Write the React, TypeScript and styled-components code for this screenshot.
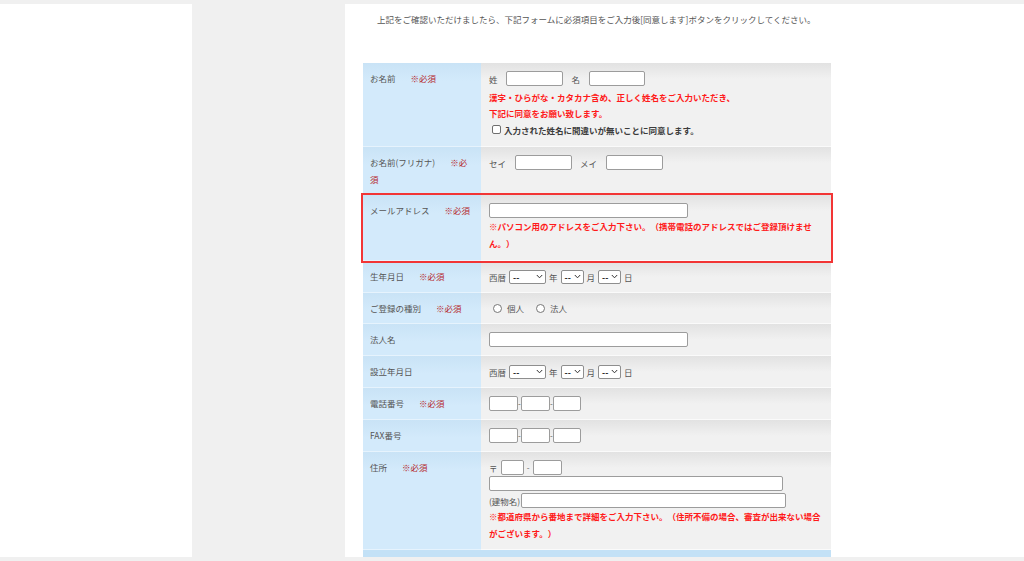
import React from 'react';
import styled, { createGlobalStyle, css } from 'styled-components';

const GlobalStyle = createGlobalStyle`
  html, body {
    margin: 0;
    padding: 0;
    background: #f0f0f0;
  }
  body {
    font-family: "Noto Sans CJK JP", "Noto Sans", sans-serif;
    color: #555;
    text-spacing-trim: space-all;
  }
`;

const Frame = styled.div`
  display: flex;
  height: 561px;
  padding: 4px 0;
  box-sizing: border-box;
  overflow: hidden;
`;

const SidePane = styled.aside`
  width: 192px;
  flex-shrink: 0;
  background: #fff;
`;

const Gutter = styled.div`
  width: 153px;
  flex-shrink: 0;
`;

const Main = styled.main`
  flex: 1;
  background: #fff;
  overflow: hidden;
  padding: 7px 0 0 18px;
`;

const Lead = styled.p`
  margin: 0 0 36px 14px;
  font-size: 8.5px;
  line-height: 16px;
  color: #555;
  white-space: nowrap;
`;

const Form = styled.div`
  width: 468px;
  display: flex;
  flex-direction: column;
`;

const Row = styled.div<{ $highlight?: boolean }>`
  display: grid;
  grid-template-columns: 118px 350px;
  ${(p) =>
    p.$highlight &&
    css`
      position: relative;
      z-index: 1;
      outline: 2px solid #f23535;
    `}
`;

const LabelCell = styled.div`
  padding: 7px 10px 6px 7px;
  background: linear-gradient(#c9e3f6, #d3eafb 18px, #d3eafb);
  border-bottom: 1px solid #e6f3fd;
  font-size: 8.5px;
  line-height: 17px;
  color: #555;
`;

const Required = styled.span`
  margin-left: 15px;
  color: #b5282c;
`;

const ValueCell = styled.div<{ $pb?: number }>`
  padding: 8px 8px ${(p) => p.$pb ?? 8}px 8px;
  background: linear-gradient(#e2e2e2, #f1f1f1 16px, #f1f1f1);
  border-bottom: 1px solid #fafafa;
  font-size: 8.5px;
  color: #555;
`;

const Line = styled.div<{ $gap?: number; $mt?: number; $h?: number }>`
  display: flex;
  align-items: center;
  gap: ${(p) => p.$gap ?? 0}px;
  height: ${(p) => p.$h ?? 15}px;
  margin-top: ${(p) => p.$mt ?? 0}px;
  white-space: nowrap;
`;

const TextInput = styled.input.attrs({ type: 'text' })<{ $w: number }>`
  width: ${(p) => p.$w}px;
  height: 15px;
  box-sizing: border-box;
  margin: 0;
  padding: 0 2px;
  border: 1px solid #9c9c9c;
  border-radius: 2px;
  background: #fff;
  outline: none;
  flex-shrink: 0;
`;

const Dash = styled.span`
  width: 3px;
  text-align: center;
  font-size: 8px;
  color: #555;
`;

const SelectBox = styled.span<{ $w: number }>`
  display: inline-flex;
  align-items: center;
  justify-content: space-between;
  width: ${(p) => p.$w}px;
  height: 14px;
  box-sizing: border-box;
  padding: 0 2px 0 3px;
  border: 1px solid #8e8e8e;
  border-radius: 2px;
  background: #fff;
  font-size: 8.5px;
  font-weight: bold;
  color: #222;
`;

const Note = styled.p<{ $lh?: number; $mt?: number }>`
  margin: ${(p) => p.$mt ?? 0}px 0 0 0;
  font-size: 8.5px;
  line-height: ${(p) => p.$lh ?? 17}px;
  font-weight: bold;
  color: #ff1a1a;
`;

const CheckLine = styled.label`
  display: flex;
  align-items: center;
  gap: 3px;
  height: 17px;
  padding-left: 3px;
  font-size: 8.5px;
  font-weight: bold;
  color: #3c3c3c;
`;

const CheckBox = styled.input.attrs({ type: 'checkbox' })`
  appearance: none;
  width: 9px;
  height: 9px;
  margin: 0;
  border: 1px solid #6f6f6f;
  border-radius: 2px;
  background: #fff;
`;

const RadioGroup = styled.div`
  display: flex;
  align-items: center;
  gap: 12px;
  height: 14px;
  padding-left: 4px;
`;

const RadioLabel = styled.label`
  display: flex;
  align-items: center;
  gap: 5px;
  font-size: 8.5px;
  color: #555;
`;

const Radio = styled.input.attrs({ type: 'radio' })`
  appearance: none;
  width: 9px;
  height: 9px;
  margin: 0;
  border: 1px solid #777;
  border-radius: 50%;
  background: #fff;
`;

const FooterRow = styled.div`
  height: 20px;
  background: #c3e1f6;
`;

const Chevron = () => (
  <svg width="7" height="5" viewBox="0 0 7 5">
    <polyline points="0.8,1 3.5,3.8 6.2,1" fill="none" stroke="#333" strokeWidth="1" />
  </svg>
);

const Select: React.FC<{ w: number }> = ({ w }) => (
  <SelectBox $w={w}>
    <span>--</span>
    <Chevron />
  </SelectBox>
);

const DateLine = () => (
  <Line $gap={3}>
    <span>西暦</span>
    <Select w={37} />
    <span>年</span>
    <Select w={23} />
    <span>月</span>
    <Select w={23} />
    <span>日</span>
  </Line>
);

const PhoneLine = () => (
  <Line>
    <TextInput $w={29} />
    <Dash>-</Dash>
    <TextInput $w={29} />
    <Dash>-</Dash>
    <TextInput $w={28} />
  </Line>
);

const Label: React.FC<{ text: string; required?: boolean }> = ({ text, required }) => (
  <LabelCell>
    {text}
    {required && <Required>※必須</Required>}
  </LabelCell>
);

export default function App() {
  return (
    <>
      <GlobalStyle />
      <Frame>
        <SidePane />
        <Gutter />
        <Main>
          <Lead>
            上記をご確認いただけましたら、下記フォームに必須項目をご入力後[同意します]ボタンをクリックしてください。
          </Lead>
          <Form>
            <Row>
              <Label text="お名前" required />
              <ValueCell>
                <Line $gap={8.5}>
                  <span>姓</span>
                  <TextInput $w={57} />
                  <span>名</span>
                  <TextInput $w={56} />
                </Line>
                <Note $lh={16} $mt={3}>
                  漢字・ひらがな・カタカナ含め、正しく姓名をご入力いただき、
                  <br />
                  下記に同意をお願い致します。
                </Note>
                <CheckLine>
                  <CheckBox />
                  入力された姓名に間違いが無いことに同意します。
                </CheckLine>
              </ValueCell>
            </Row>

            <Row>
              <Label text="お名前(フリガナ)" required />
              <ValueCell>
                <Line $gap={8.5}>
                  <span>セイ</span>
                  <TextInput $w={57} />
                  <span>メイ</span>
                  <TextInput $w={57} />
                </Line>
              </ValueCell>
            </Row>

            <Row $highlight>
              <Label text="メールアドレス" required />
              <ValueCell>
                <Line>
                  <TextInput $w={199} />
                </Line>
                <Note>
                  ※パソコン用のアドレスをご入力下さい。（携帯電話のアドレスではご登録頂けません。）
                </Note>
              </ValueCell>
            </Row>

            <Row>
              <Label text="生年月日" required />
              <ValueCell>
                <DateLine />
              </ValueCell>
            </Row>

            <Row>
              <Label text="ご登録の種別" required />
              <ValueCell>
                <RadioGroup>
                  <RadioLabel>
                    <Radio name="kind" />
                    個人
                  </RadioLabel>
                  <RadioLabel>
                    <Radio name="kind" />
                    法人
                  </RadioLabel>
                </RadioGroup>
              </ValueCell>
            </Row>

            <Row>
              <Label text="法人名" />
              <ValueCell>
                <Line>
                  <TextInput $w={199} />
                </Line>
              </ValueCell>
            </Row>

            <Row>
              <Label text="設立年月日" />
              <ValueCell>
                <DateLine />
              </ValueCell>
            </Row>

            <Row>
              <Label text="電話番号" required />
              <ValueCell>
                <PhoneLine />
              </ValueCell>
            </Row>

            <Row>
              <Label text="FAX番号" />
              <ValueCell>
                <PhoneLine />
              </ValueCell>
            </Row>

            <Row>
              <Label text="住所" required />
              <ValueCell $pb={7}>
                <Line $gap={3}>
                  <span>〒</span>
                  <TextInput $w={23} />
                  <Dash>-</Dash>
                  <TextInput $w={29} />
                </Line>
                <Line $mt={1}>
                  <TextInput $w={294} />
                </Line>
                <Line $mt={2} $gap={1}>
                  <span>(建物名)</span>
                  <TextInput $w={265} />
                </Line>
                <Note>
                  ※都道府県から番地まで詳細をご入力下さい。（住所不備の場合、審査が出来ない場合がございます。）
                </Note>
              </ValueCell>
            </Row>

            <FooterRow />
          </Form>
        </Main>
      </Frame>
    </>
  );
}
